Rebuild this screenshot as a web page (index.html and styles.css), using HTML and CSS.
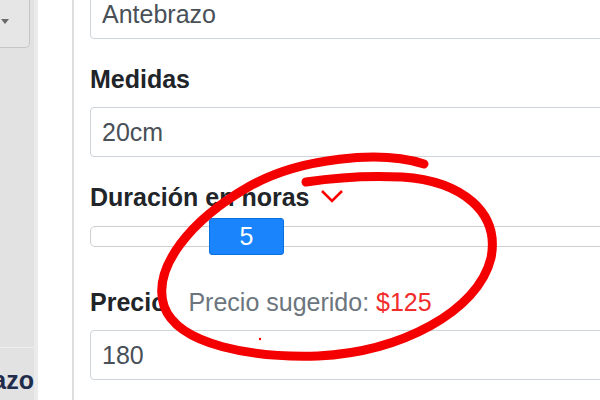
FILE: index.html
```html
<!DOCTYPE html>
<html lang="es">
<head>
    <meta charset="UTF-8">
    <meta name="viewport" content="width=device-width, initial-scale=1.0">
    <title>Nuevo tatuaje</title>
    <link rel="stylesheet" href="styles.css">
</head>
<body>
    <div class="page">
        <aside class="sidebar">
            <div class="sidebar-select">
                <span class="caret"></span>
            </div>
            <div class="sidebar-fill"></div>
            <div class="sidebar-item">Antebrazo</div>
        </aside>

        <main class="content">
            <form class="tattoo-form">
                <div class="form-group">
                    <input class="form-control" type="text" value="Antebrazo">
                </div>

                <div class="form-group">
                    <label class="form-label">Medidas</label>
                    <input class="form-control" type="text" value="20cm">
                </div>

                <div class="form-group range-group">
                    <label class="form-label">
                        Duración en horas
                        <svg class="chevron" width="24" height="14" viewBox="0 0 24 14">
                            <polyline points="2,2 12,12 22,2" fill="none" stroke="#f00" stroke-width="2.6"/>
                        </svg>
                    </label>
                    <div class="range">
                        <div class="range-track"></div>
                        <div class="range-thumb">5</div>
                    </div>
                </div>

                <div class="form-group">
                    <div class="price-row">
                        <label class="form-label">Precio</label>
                        <span class="price-hint">Precio sugerido: <span class="price-value">$125</span></span>
                    </div>
                    <input class="form-control" type="text" value="180">
                </div>
            </form>
        </main>

        <!-- hand drawn marker circle -->
        <svg class="annotation" width="600" height="400" viewBox="0 0 600 400">
            <path d="M 424 164 C 380 150, 300 158, 250 186 C 190 220, 152 268, 164 306 C 178 346, 255 358, 318 356 C 400 352, 478 312, 491 258 C 500 212, 462 181, 402 177 C 362 175, 332 178, 306 182"
                  fill="none" stroke="#f40000" stroke-width="9" stroke-linecap="round" stroke-linejoin="round"/>
            <circle cx="260" cy="339" r="1.2" fill="#f40000"/>
        </svg>
    </div>
</body>
</html>
```

FILE: styles.css
```css
* {
    margin: 0;
    padding: 0;
    box-sizing: border-box;
}
body {
    font-family: 'Liberation Sans', Arial, sans-serif;
    background: white;
    color: #212529;
    overflow: hidden;
}
.page {
    position: relative;
    display: flex;
    width: 600px;
    height: 400px;
    overflow: hidden;
}
.sidebar {
    width: 38px;
    flex-shrink: 0;
    display: flex;
    flex-direction: column;
    background: #e2e2e2;
    border-right: 4px solid #ebebeb;
}
.sidebar-select {
    width: 30px;
    height: 48px;
    background: #e6e6e6;
    border: 1px solid #c6c6c6;
    border-top: none;
    border-left: none;
    border-radius: 0 0 5px 0;
    padding: 19px 0 0 1px;
}
.caret {
    display: block;
    width: 0;
    height: 0;
    border-left: 4px solid transparent;
    border-right: 4px solid transparent;
    border-top: 5px solid #6a6a6a;
}
.sidebar-fill {
    flex: 1;
}
.sidebar-item {
    height: 53px;
    border-top: 1px solid #eeeeee;
    padding-top: 17px;
    display: flex;
    justify-content: flex-end;
    overflow: hidden;
    white-space: nowrap;
    font-size: 25px;
    font-weight: bold;
    line-height: 30px;
    color: #1f2c4c;
}
.content {
    flex: 1;
    margin-left: 34px;
    border-left: 2px solid #dedede;
    padding-left: 16px;
    overflow: hidden;
}
.tattoo-form {
    width: 560px;
    margin-top: -11px;
}
.form-group {
    margin-bottom: 25px;
}
.form-label {
    display: block;
    font-size: 25px;
    font-weight: bold;
    line-height: 30px;
    margin-bottom: 13px;
    color: #212529;
}
.form-control {
    display: block;
    width: 100%;
    height: 50px;
    padding: 0 11px;
    font-family: inherit;
    font-size: 25px;
    color: #495057;
    background: white;
    border: 1px solid #ced4da;
    border-radius: 4px;
}
.chevron {
    margin-left: 4px;
    vertical-align: 3px;
}
.range-group .form-label {
    margin-bottom: 6px;
}
.range {
    position: relative;
    height: 37px;
    display: flex;
    align-items: center;
}
.range-track {
    width: 100%;
    height: 21px;
    border: 1px solid #cfcfcf;
    border-radius: 5px;
    background: white;
}
.range-thumb {
    position: absolute;
    left: 119px;
    top: 0;
    width: 75px;
    height: 37px;
    background: #1a84fc;
    border: 1px solid #0a6fe0;
    border-radius: 3px;
    color: white;
    font-size: 25px;
    line-height: 35px;
    text-align: center;
}
.range-group {
    margin-bottom: 32px;
}
.price-row {
    display: flex;
    align-items: baseline;
}
.price-hint {
    margin-left: 22px;
    font-size: 25px;
    color: #6c757d;
}
.price-value {
    color: #f22c2c;
}
.annotation {
    position: absolute;
    left: 0;
    top: 0;
    pointer-events: none;
}
```
